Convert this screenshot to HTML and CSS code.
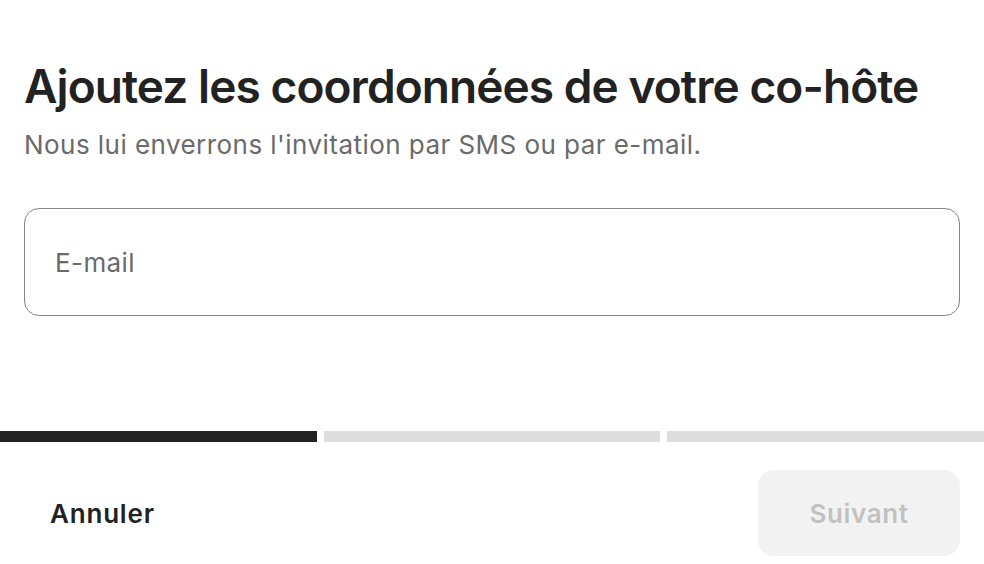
FILE: index.html
```html
<!DOCTYPE html>
<html lang="fr">
<head>
    <meta charset="UTF-8">
    <meta name="viewport" content="width=device-width, initial-scale=1.0">
    <title>Co-hôte</title>
    <link rel="stylesheet" href="styles.css">
</head>
<body>
    <div id="panel">
        <div id="content">
            <h1 class="title">Ajoutez les coordonnées de votre co-hôte</h1>
            <p class="subtitle">Nous lui enverrons l'invitation par SMS ou par e-mail.</p>
            <div class="field">
                <input type="text" class="field_input" placeholder="E-mail">
            </div>
        </div>
        <div id="progress">
            <div class="step done"></div>
            <div class="step"></div>
            <div class="step"></div>
        </div>
        <div id="footer">
            <button class="btn_link">Annuler</button>
            <button class="btn_next" disabled>Suivant</button>
        </div>
    </div>
</body>
</html>
```

FILE: styles.css
```css
body{
    margin: 0;
    background: #fff;
    font-family: Inter, "Noto Sans", sans-serif;
    color: #222222;
}
#content{
    padding: 58px 24px 0;
}
.title{
    margin: 0;
    font-size: 46px;
    line-height: 56px;
    font-weight: 600;
    letter-spacing: -0.92px;
}
.subtitle{
    margin: 15px 0 0;
    font-size: 26px;
    line-height: 32px;
    letter-spacing: 0.45px;
    color: #6a6a6a;
}
.field{
    margin-top: 47px;
    height: 106px;
    border: 1px solid #858585;
    border-radius: 15px;
    display: flex;
    align-items: center;
    padding: 0 28px;
}
.field_input{
    width: 100%;
    border: none;
    outline: none;
    background: none;
    font-family: Inter, "Noto Sans", sans-serif;
    font-size: 26px;
    letter-spacing: 0.4px;
    color: #222222;
}
.field_input::placeholder{
    color: #6a6a6a;
}
#progress{
    display: grid;
    grid-template-columns: 317fr 336fr 317fr;
    gap: 7px;
    margin-top: 115px;
}
.step{
    height: 11px;
    background: #dddddd;
}
.step.done{
    background: #222222;
}
#footer{
    display: flex;
    justify-content: space-between;
    align-items: center;
    padding: 28px 24px 0;
}
.btn_link{
    background: none;
    border: none;
    padding: 8px 26px;
    font-family: Inter, "Noto Sans", sans-serif;
    font-size: 26px;
    font-weight: 600;
    letter-spacing: 0.8px;
    color: #222222;
}
.btn_next{
    width: 202px;
    height: 86px;
    border: none;
    border-radius: 16px;
    background: #f2f2f2;
    font-family: Inter, "Noto Sans", sans-serif;
    font-size: 26px;
    font-weight: 600;
    letter-spacing: 0.6px;
    color: #c1c1c1;
}
```
